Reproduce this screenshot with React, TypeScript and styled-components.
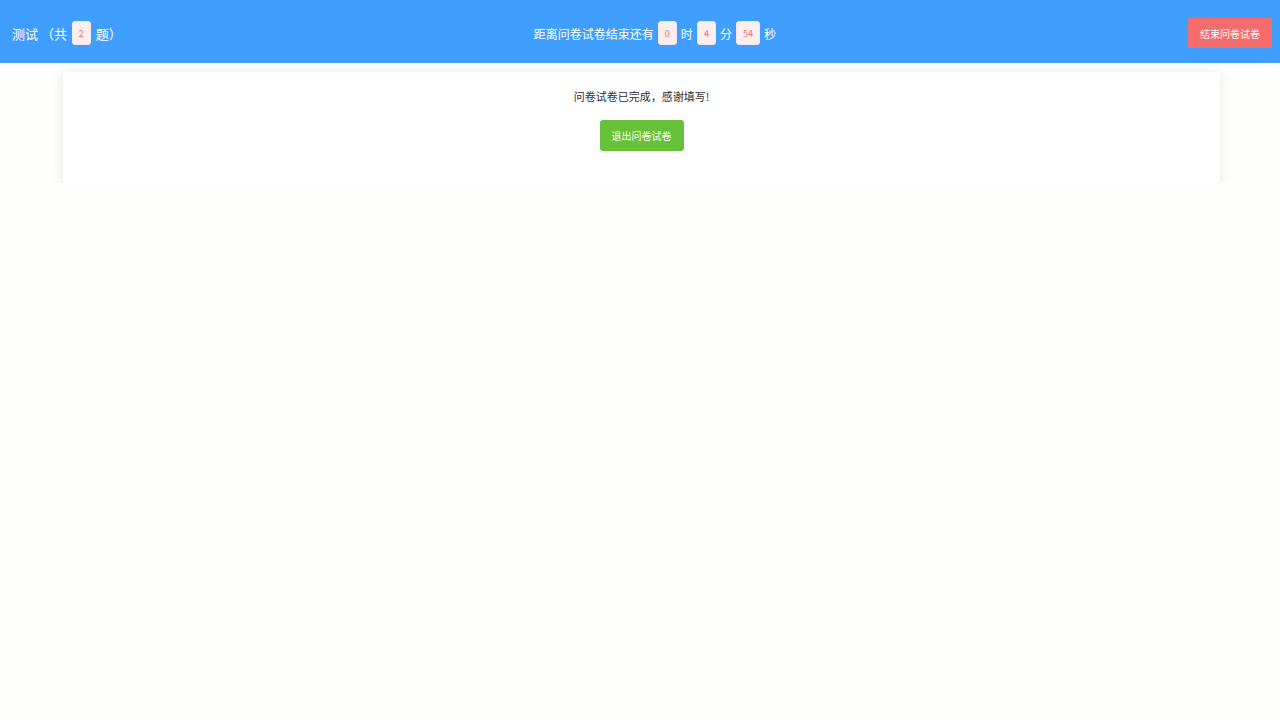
import { createGlobalStyle, styled } from "styled-components";

const GlobalStyle = createGlobalStyle`
  body {
    margin: 0;
    background: #fefefd;
    font-family: "Noto Sans CJK SC", "Noto Sans", sans-serif;
  }
`;

export default function App() {
  return (
    <>
      <GlobalStyle />
      <Header>
        <Title>
          测试 （共 <Badge>2</Badge> 题）
        </Title>
        <Timer>
          <span>距离问卷试卷结束还有</span>
          <Badge>0</Badge>
          <span>时</span>
          <Badge>4</Badge>
          <span>分</span>
          <Badge>54</Badge>
          <span>秒</span>
        </Timer>
        <EndButton>结束问卷试卷</EndButton>
      </Header>
      <Card>
        <Message>问卷试卷已完成，感谢填写!</Message>
        <ExitButton>退出问卷试卷</ExitButton>
      </Card>
    </>
  );
}

const Header = styled.header`
  display: flex;
  justify-content: space-between;
  align-items: center;
  height: 63px;
  padding: 3px 8px 0 12px;
  box-sizing: border-box;
  background: #409eff;
  color: #ffffff;
  font-size: 13px;
`;

const Title = styled.div`
  display: flex;
  align-items: center;
  gap: 2px;
  white-space: pre;
`;

const Timer = styled.div`
  display: flex;
  align-items: center;
  gap: 4px;
  font-size: 12px;
`;

const Badge = styled.span`
  display: inline-flex;
  align-items: center;
  justify-content: center;
  min-width: 19px;
  height: 24px;
  padding: 0 6px;
  box-sizing: border-box;
  background: #fef0f0;
  border: 1px solid #fde2e2;
  border-radius: 3px;
  color: #f56c6c;
  font-size: 9px;
`;

const EndButton = styled.button`
  width: 84px;
  height: 30px;
  border: none;
  border-radius: 2px;
  background: #f56c6c;
  color: #ffffff;
  font-family: inherit;
  font-size: 10px;
`;

const Card = styled.div`
  display: flex;
  flex-direction: column;
  align-items: center;
  width: 1157px;
  margin: 9px 0 0 63px;
  padding: 17px 0 32px;
  box-sizing: border-box;
  background: #ffffff;
  border-radius: 4px;
  box-shadow: 0 2px 14px rgba(0, 0, 0, 0.09);
`;

const Message = styled.p`
  margin: 0 0 17px;
  line-height: 14px;
  font-size: 11px;
  color: #303133;
`;

const ExitButton = styled.button`
  width: 84px;
  height: 31px;
  border: none;
  border-radius: 3px;
  background: #67c23a;
  color: #ffffff;
  font-family: inherit;
  font-size: 10px;
`;
